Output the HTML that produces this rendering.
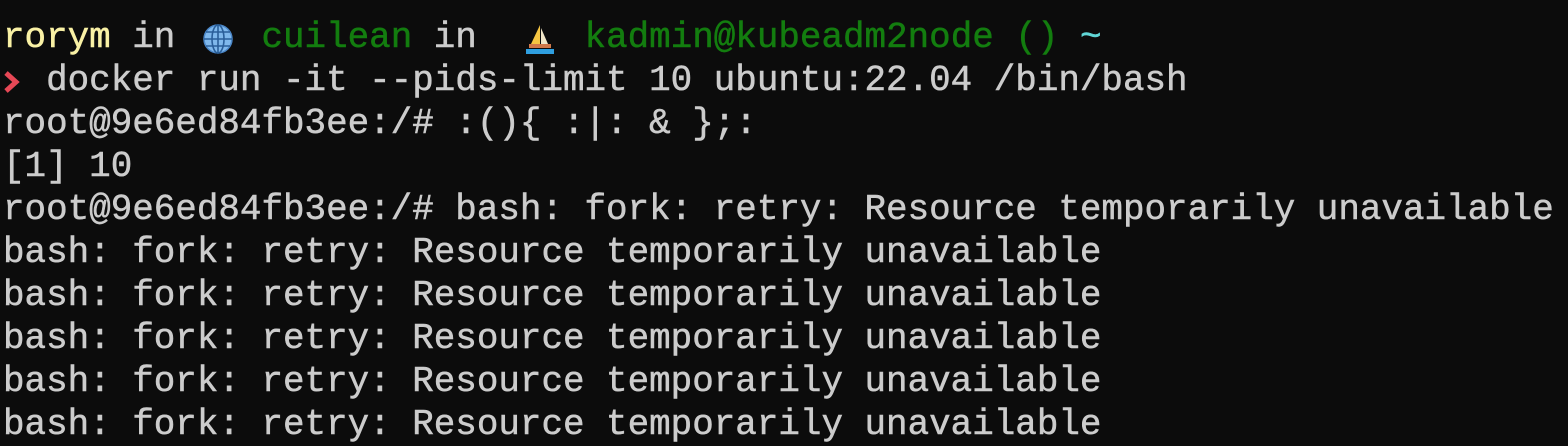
<!DOCTYPE html>
<html><head><meta charset="utf-8"><style>
html,body{margin:0;padding:0;background:#0c0c0c;width:1568px;height:437px;overflow:hidden}
.t{position:absolute;left:3px;top:16px;font-family:"Liberation Mono",monospace;font-size:35.9px;line-height:43px;color:#cccccc;-webkit-text-stroke:0.5px currentColor}
.l{height:43px;position:relative;white-space:pre}
.y{color:#f9f1a5}.g{color:#137d0f}
.c{color:#61d6d6}
.ic{position:absolute;top:6px}
</style></head><body>
<div class="t">
<div class="l"><span class="y">rorym</span> in    <span class="g">cuilean</span> in     <span class="g">kadmin@kubeadm2node ()</span> <span class="c">~</span><svg class="ic" style="left:198px" width="34" height="34" viewBox="0 0 34 34"><circle cx="17" cy="17" r="14" fill="#7fb8ec" stroke="#4a86c8" stroke-width="1.5"/><g fill="none" stroke="#2a5f9a" stroke-width="1.6"><ellipse cx="17" cy="17" rx="6" ry="14"/><line x1="17" y1="3" x2="17" y2="31"/><line x1="3" y1="17" x2="31" y2="17"/><line x1="5" y1="10" x2="29" y2="10"/><line x1="5" y1="24" x2="29" y2="24"/></g></svg><svg class="ic" style="left:520px" width="34" height="34" viewBox="0 0 34 34"><polygon points="17,3 17,22 8,22" fill="#f5c542"/><polygon points="18,6 18,22 25,22" fill="#f0e6c8"/><rect x="6" y="22" width="22" height="4" fill="#d0784a"/><rect x="3" y="27" width="28" height="5" fill="#2f9fe0"/></svg></div>
<div class="l">  docker run -it --pids-limit 10 ubuntu:22.04 /bin/bash<svg style="position:absolute;left:0;top:12px" width="18" height="22" viewBox="0 0 18 22"><polyline points="3,2 13,11 3,20" fill="none" stroke="#e74856" stroke-width="5"/></svg></div>
<div class="l">root@9e6ed84fb3ee:/# :(){ :|: &amp; };:</div>
<div class="l">[1] 10</div>
<div class="l">root@9e6ed84fb3ee:/# bash: fork: retry: Resource temporarily unavailable</div>
<div class="l">bash: fork: retry: Resource temporarily unavailable</div>
<div class="l">bash: fork: retry: Resource temporarily unavailable</div>
<div class="l">bash: fork: retry: Resource temporarily unavailable</div>
<div class="l">bash: fork: retry: Resource temporarily unavailable</div>
<div class="l">bash: fork: retry: Resource temporarily unavailable</div>
</div>
</body></html>
